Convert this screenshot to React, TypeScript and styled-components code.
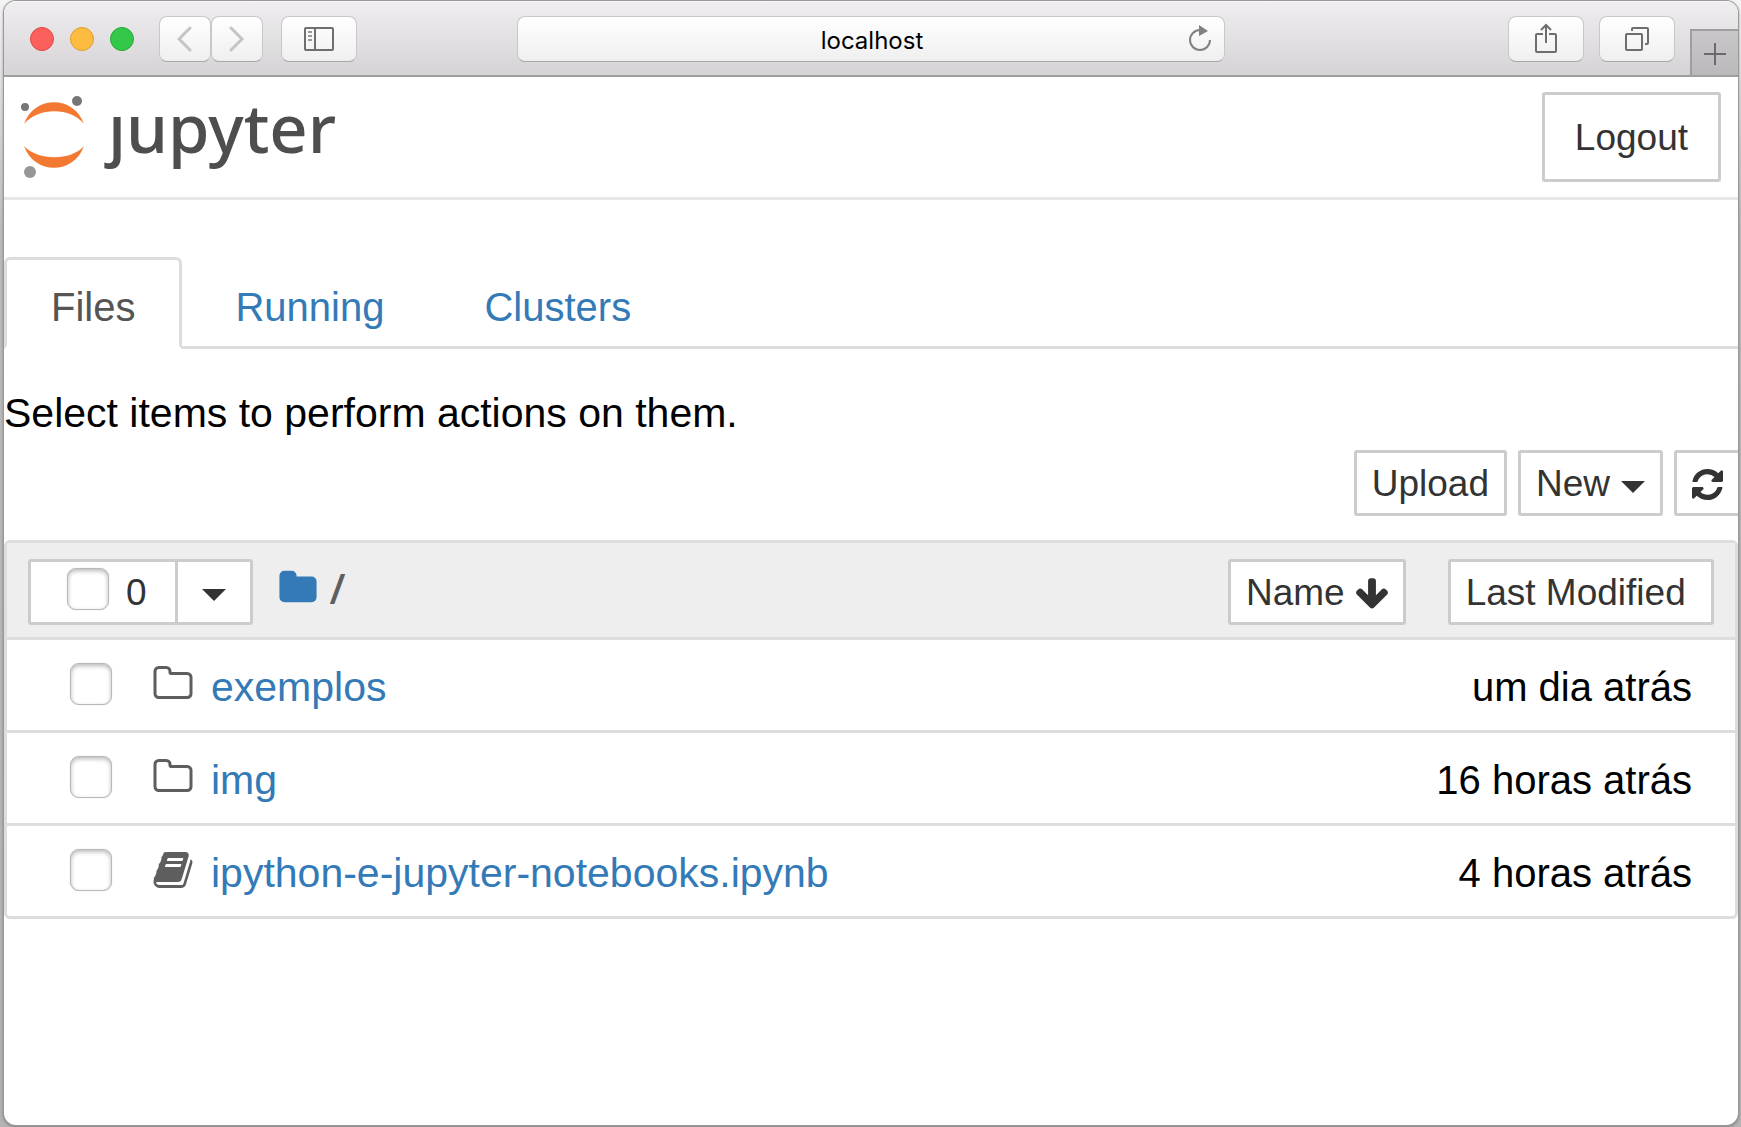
import React, { useState } from "react";
import styled, { createGlobalStyle, css } from "styled-components";

const GlobalStyle = createGlobalStyle`
  *, *::before, *::after { box-sizing: border-box; }
  body {
    margin: 0;
    background: linear-gradient(#f4f4f4, #bdbdbd 240px, #b4b4b4);
    font-family: "Liberation Sans", Arial, sans-serif;
    font-size: 41px;
    line-height: 56px;
    color: #000;
  }
  button, input { font: inherit; color: inherit; margin: 0; }
  a { color: #337ab7; text-decoration: none; }
  svg { display: block; flex: none; }
`;

const Desktop = styled.div`
  min-height: 100vh;
  padding: 1px 3px 2px 4px;
  display: flex;
`;

const Window = styled.div`
  flex: 1;
  min-width: 0;
  overflow: hidden;
  border-radius: 12px;
  background: #fff;
  box-shadow: 0 0 0 1px #999, 0 1px 3px 1px rgba(0, 0, 0, 0.3);
`;

/* ---------- browser toolbar ---------- */

const Toolbar = styled.div`
  display: grid;
  grid-template-columns: 1fr minmax(0, 708px) 1fr;
  height: 76px;
  border-bottom: 2px solid #9f9d9f;
  background: linear-gradient(#f0eef0, #d5d3d5);
  box-shadow: inset 0 1px 0 #f8f7f8;
`;

const ToolbarStart = styled.div`
  display: flex;
  align-items: flex-start;
  padding: 15px 0 0 26px;
`;

const ToolbarEnd = styled.div`
  display: flex;
  align-items: flex-start;
  justify-content: flex-end;
  gap: 15px;
  padding-top: 15px;
`;

const Lights = styled.div`
  display: flex;
  align-items: center;
  gap: 16px;
  height: 46px;
  margin-right: 25px;
`;

const Light = styled.button<{ $fill: string; $edge: string }>`
  width: 24px;
  height: 24px;
  padding: 0;
  border: 1px solid ${(p) => p.$edge};
  border-radius: 50%;
  background: ${(p) => p.$fill};
`;

const raised = css`
  border: 1px solid #c9c7c9;
  border-bottom-color: #a9a7a9;
  border-radius: 8px;
  background: linear-gradient(#fff, #f0eff0);
`;

const ToolButton = styled.button<{ $narrow?: boolean }>`
  ${raised}
  display: flex;
  align-items: center;
  justify-content: center;
  width: ${(p) => (p.$narrow ? 52 : 76)}px;
  height: 46px;
  padding: 0;
`;

const NavPair = styled.div`
  display: flex;
  margin-right: 18px;
`;

const AddressBar = styled.div`
  ${raised}
  display: flex;
  align-items: center;
  height: 46px;
  margin-top: 15px;
  padding: 0 12px 0 38px;
`;

const Address = styled.input`
  flex: 1;
  min-width: 0;
  padding: 3px 0 0;
  border: 0;
  outline: 0;
  background: none;
  font-family: Inter, Roboto, sans-serif;
  font-size: 24px;
  line-height: 32px;
  text-align: center;
`;

const PlainButton = styled.button`
  padding: 0;
  border: 0;
  background: none;
`;

const NewTab = styled.button`
  display: flex;
  align-items: center;
  justify-content: center;
  align-self: flex-end;
  width: 48px;
  height: 46px;
  padding: 2px 0 0;
  border: solid #9f9d9f;
  border-width: 2px 0 0 2px;
  background: linear-gradient(#c9c7c9, #bbb9bb);
`;

/* ---------- notebook page ---------- */

const Header = styled.header`
  display: flex;
  align-items: flex-start;
  justify-content: space-between;
  height: 123px;
  padding: 15px 17px 0;
  border-bottom: 3px solid #e7e7e7;
`;

const Brand = styled.a`
  display: flex;
  align-items: flex-start;
  gap: 23px;
  color: #4e4e4e;
`;

const Wordmark = styled.span`
  font-family: "Noto Sans", "Open Sans", sans-serif;
  font-size: 67px;
  font-weight: 500;
  line-height: 70px;
`;

const Button = styled.button<{ $large?: boolean }>`
  display: flex;
  align-items: center;
  gap: 11px;
  height: ${(p) => (p.$large ? 90 : 66)}px;
  padding: 2px ${(p) => (p.$large ? 30 : 15)}px 0;
  border: 3px solid #ccc;
  border-radius: 3px;
  background: #fff;
  color: #333;
  font-size: 37px;
  line-height: 48px;
  white-space: pre;
  flex: none;
`;

const Tabs = styled.nav`
  display: flex;
  gap: 6px;
  margin-top: 57px;
  border-bottom: 3px solid #ddd;
  font-size: 40px;
`;

const Tab = styled.a<{ $active?: boolean }>`
  height: 92px;
  margin-bottom: -3px;
  padding: 19px 44px 0;
  border: 3px solid transparent;
  border-radius: 6px 6px 0 0;
  ${(p) =>
    p.$active &&
    css`
      border-color: #ddd #ddd #fff;
      background: #fff;
      color: #555;
    `}
`;

const Hint = styled.p`
  margin: 36px 0 9px;
`;

const Actions = styled.div`
  display: flex;
  justify-content: flex-end;
  gap: 11px;
  margin: 0 -3px 24px 0;
`;

const FileTable = styled.table`
  width: 100%;
  border: 3px solid #ddd;
  border-radius: 6px;
  border-spacing: 0;
`;

const HeadCell = styled.th<{ $shrink?: boolean }>`
  ${(p) => p.$shrink && "width: 1px;"}
  padding: 16px 21px 12px;
  background: #eee;
  font-weight: normal;
`;

const HeadTools = styled.div`
  display: flex;
  align-items: center;
`;

const SelectGroup = styled.div`
  display: flex;
  height: 66px;
  border: 3px solid #ccc;
  border-radius: 3px;
  background: #fff;
  color: #333;
  font-size: 37px;
  line-height: 50px;
`;

const SelectAll = styled.label`
  display: flex;
  align-items: flex-start;
  gap: 17px;
  padding: 6px 28px 0 36px;
  border-right: 3px solid #ccc;
`;

const MenuButton = styled.button`
  display: flex;
  align-items: center;
  justify-content: center;
  width: 72px;
  padding: 0;
  border: 0;
  background: none;
`;

const Breadcrumb = styled.div`
  display: flex;
  align-items: center;
  gap: 12px;
  height: 66px;
  margin: 0 auto 0 25px;
  padding-bottom: 8px;
  color: #5e5e5e;
  font-family: "Open Sans", "Noto Sans", sans-serif;
  font-size: 41px;
  font-weight: 600;
`;

const Cell = styled.td`
  height: 93px;
  padding: 3px 0 0 63px;
  border-top: 3px solid #ddd;
  white-space: nowrap;
`;

const DateCell = styled(Cell)`
  padding: 3px 43px 0 0;
  font-size: 40px;
  text-align: right;
`;

const Check = styled.input.attrs({ type: "checkbox" })`
  appearance: none;
  flex: none;
  width: 42px;
  height: 42px;
  border: 1px solid #b9b9b9;
  border-radius: 9px;
  background: #fff;
  box-shadow: inset 0 2px 4px rgba(0, 0, 0, 0.28), 0 0 1px 0 #bbb;
  &:checked { background: #337ab7; }
`;

const Item = styled.div`
  display: flex;
  align-items: center;
  ${Check}, svg { margin-bottom: 5px; }
`;

const ItemLink = styled.a`
  display: flex;
  align-items: center;
  gap: 17px;
  margin-left: 40px;
`;

/* ---------- icons ---------- */

const Glyph = ({ d, size, color, box = "0 0 1792 1792" }: { d: string; size: number; color: string; box?: string }) => (
  <svg width={size} height={size} viewBox={box} fill={color} aria-hidden="true">
    <path d={d} />
  </svg>
);

const FOLDER =
  "M1728 608v704q0 92-66 158t-158 66h-1216q-92 0-158-66t-66-158v-960q0-92 66-158t158-66h320q92 0 158 66t66 158v32h672q92 0 158 66t66 158z";
const FOLDER_OPEN =
  "M1600 1312v-704q0-40-28-68t-68-28h-704q-40 0-68-28t-28-68v-64q0-40-28-68t-68-28h-320q-40 0-68 28t-28 68v960q0 40 28 68t68 28h1216q40 0 68-28t28-68zm128-704v704q0 92-66 158t-158 66h-1216q-92 0-158-66t-66-158v-960q0-92 66-158t158-66h320q92 0 158 66t66 158v32h672q92 0 158 66t66 158z";
const BOOK =
  "M1703 478q40 57 18 129l-275 906q-19 64-76.5 107.5t-122.5 43.5h-923q-77 0-148.5-53.5t-99.5-131.5q-24-67-2-127 0-4 3-27t4-37q1-8-3-21.5t-3-19.5q2-11 8-21t16.5-23.5 16.5-23.5q23-38 45-91.5t30-91.5q3-10 .5-30t-.5-28q3-11 17-28t17-23q21-36 42-92t25-90q1-9-2.5-32t.5-28q4-13 22-30.5t22-22.5q19-26 42.5-84.5t27.5-96.5q1-8-3-25.5t-2-26.5q2-8 9-18t18-23 17-21q8-12 16.5-30.5t15-35 16-36 19.5-32 26.5-23.5 36-11.5 47.5 5.5l-1 3q38-9 51-9h761q74 0 114 56t18 130l-274 906q-36 119-71.5 153.5t-128.5 34.5h-869q-27 0-38 15-11 16-1 43 24 70 144 70h923q29 0 56-15.5t35-41.5l300-987q7-22 5-57 38 15 59 43zm-1064 2q-4 13 2 22.5t20 9.5h608q13 0 25.5-9.5t16.5-22.5l21-64q4-13-2-22.5t-20-9.5h-608q-13 0-25.5 9.5t-16.5 22.5zm-83 256q-4 13 2 22.5t20 9.5h608q13 0 25.5-9.5t16.5-22.5l21-64q4-13-2-22.5t-20-9.5h-608q-13 0-25.5 9.5t-16.5 22.5z";
const ARROW_DOWN =
  "M1675 832q0 53-37 90l-651 652q-39 37-91 37-53 0-90-37l-651-652q-38-36-38-90 0-53 38-91l74-75q39-37 91-37 53 0 90 37l294 294v-704q0-52 38-90t90-38h128q52 0 90 38t38 90v704l294-294q37-37 90-37 52 0 91 37l75 75q37 39 37 91z";
const REFRESH =
  "M1639 1056q0 5-1 7-64 268-268 434.5t-478 166.5q-146 0-282.5-55t-243.5-157l-129 129q-19 19-45 19t-45-19-19-45v-448q0-26 19-45t45-19h448q26 0 45 19t19 45-19 45l-137 137q71 66 161 102t187 36q134 0 250-65t186-179q11-17 53-117 8-23 30-23h192q13 0 22.5 9.5t9.5 22.5zm25-800v448q0 26-19 45t-45 19h-448q-26 0-45-19t-19-45 19-45l138-138q-148-137-349-137-134 0-250 65t-186 179q-11 17-53 117-8 23-30 23h-199q-13 0-22.5-9.5t-9.5-22.5v-7q65-268 270-434.5t480-166.5q146 0 284 55.5t245 156.5l130-129q19-19 45-19t45 19 19 45z";

const Caret = () => (
  <svg width="24" height="18" viewBox="0 0 24 18" fill="#333" aria-hidden="true">
    <path d="M0 6h24L12 18z" />
  </svg>
);

const Chevron = ({ d }: { d: string }) => (
  <svg width="16" height="26" viewBox="0 0 16 26" fill="none" stroke="#c4c4c4" strokeWidth="3" strokeLinecap="round" aria-hidden="true">
    <path d={d} />
  </svg>
);

const SidebarIcon = () => (
  <svg width="30" height="24" viewBox="0 0 30 24" fill="none" stroke="#6f6d6f" strokeWidth="2" aria-hidden="true">
    <rect x="1" y="1" width="28" height="22" rx="1" />
    <path d="M11 1v22" />
    <path d="M4 5h4M4 9h4M4 13h4" stroke="#9a989a" />
  </svg>
);

const ShareIcon = () => (
  <svg width="22" height="32" viewBox="0 0 22 32" fill="none" stroke="#6f6d6f" strokeWidth="2" aria-hidden="true">
    <path d="M8 11H2q-1 0-1 1v16q0 1 1 1h18q1 0 1-1V12q0-1-1-1h-6M11 20V2M6 7l5-5 5 5" />
  </svg>
);

const WindowsIcon = () => (
  <svg width="24" height="24" viewBox="0 0 24 24" fill="none" stroke="#6f6d6f" strokeWidth="2" aria-hidden="true">
    <rect x="1" y="7" width="16" height="16" rx="1" />
    <path d="M7 4V2q0-1 1-1h14q1 0 1 1v14q0 1-1 1h-2" />
  </svg>
);

const ReloadIcon = () => (
  <svg width="24" height="28" viewBox="0 0 24 28" aria-hidden="true">
    <path d="M12 5a10 10 0 1 0 10 10" fill="none" stroke="#828082" strokeWidth="2" />
    <path d="M11 0v11l9-5z" fill="#828082" />
  </svg>
);

const PlusIcon = () => (
  <svg width="22" height="22" viewBox="0 0 22 22" stroke="#6c6a6c" strokeWidth="2" aria-hidden="true">
    <path d="M11 0v22M0 11h22" />
  </svg>
);

const Planet = () => (
  <svg width="64" height="88" viewBox="0 0 64 88" aria-hidden="true">
    <path d="M3 32C13 3 53 3 63 32C50 15 17 15 3 32z" fill="#f37933" />
    <path d="M3 54C13 83 53 83 63 54C50 69 17 69 3 54z" fill="#f37933" />
    <circle cx="56" cy="9" r="5" fill="#767677" />
    <circle cx="4" cy="15" r="4" fill="#767677" />
    <circle cx="9" cy="80" r="6" fill="#989798" />
  </svg>
);

const files = [
  { name: "exemplos", icon: FOLDER_OPEN, modified: "um dia atrás" },
  { name: "img", icon: FOLDER_OPEN, modified: "16 horas atrás" },
  { name: "ipython-e-jupyter-notebooks.ipynb", icon: BOOK, modified: "4 horas atrás" },
];

export default function App() {
  const [address, setAddress] = useState("localhost");
  const [selected, setSelected] = useState<string[]>([]);

  const toggle = (name: string) =>
    setSelected((s) => (s.includes(name) ? s.filter((n) => n !== name) : [...s, name]));
  const toggleAll = () => setSelected((s) => (s.length === files.length ? [] : files.map((f) => f.name)));

  return (
    <>
      <GlobalStyle />
      <Desktop>
        <Window>
          <Toolbar>
            <ToolbarStart>
              <Lights>
                <Light aria-label="Close" $fill="#fc605c" $edge="#e04845" />
                <Light aria-label="Minimize" $fill="#fdbc40" $edge="#dd9f33" />
                <Light aria-label="Zoom" $fill="#34c84a" $edge="#26a934" />
              </Lights>
              <NavPair>
                <ToolButton $narrow aria-label="Back"><Chevron d="M13 2L2 13l11 11" /></ToolButton>
                <ToolButton $narrow aria-label="Forward"><Chevron d="M2 2l11 11L2 24" /></ToolButton>
              </NavPair>
              <ToolButton aria-label="Sidebar"><SidebarIcon /></ToolButton>
            </ToolbarStart>
            <AddressBar>
              <Address aria-label="Address" value={address} onChange={(e) => setAddress(e.target.value)} />
              <PlainButton aria-label="Reload"><ReloadIcon /></PlainButton>
            </AddressBar>
            <ToolbarEnd>
              <ToolButton aria-label="Share"><ShareIcon /></ToolButton>
              <ToolButton aria-label="Show all tabs"><WindowsIcon /></ToolButton>
              <NewTab aria-label="New tab"><PlusIcon /></NewTab>
            </ToolbarEnd>
          </Toolbar>

          <Header>
            <Brand href="#" aria-label="jupyter">
              <Planet />
              <Wordmark>ȷupyter</Wordmark>
            </Brand>
            <Button $large>Logout</Button>
          </Header>

          <main>
            <Tabs>
              <Tab href="#files" $active>Files</Tab>
              <Tab href="#running">Running</Tab>
              <Tab href="#clusters">Clusters</Tab>
            </Tabs>

            <Hint>Select items to perform actions on them.</Hint>

            <Actions>
              <Button>Upload</Button>
              <Button>New<Caret /></Button>
              <Button aria-label="Refresh">
                <Glyph d={REFRESH} size={31} color="#333" box="128 128 1536 1536" />
              </Button>
            </Actions>

            <FileTable>
              <thead>
                <tr>
                  <HeadCell>
                    <HeadTools>
                      <SelectGroup>
                        <SelectAll>
                          <Check
                            aria-label="Select all"
                            checked={selected.length === files.length}
                            onChange={toggleAll}
                          />
                          {selected.length}
                        </SelectAll>
                        <MenuButton aria-label="Select by type"><Caret /></MenuButton>
                      </SelectGroup>
                      <Breadcrumb>
                        <a href="#root" aria-label="Home"><Glyph d={FOLDER} size={40} color="#337ab7" /></a>
                        <span>/</span>
                      </Breadcrumb>
                      <Button>Name<Glyph d={ARROW_DOWN} size={32} color="#333" box="112 64 1568 1568" /></Button>
                    </HeadTools>
                  </HeadCell>
                  <HeadCell $shrink>
                    <Button>Last Modified </Button>
                  </HeadCell>
                </tr>
              </thead>
              <tbody>
                {files.map((f) => (
                  <tr key={f.name}>
                    <Cell>
                      <Item>
                        <Check
                          aria-label={`Select ${f.name}`}
                          checked={selected.includes(f.name)}
                          onChange={() => toggle(f.name)}
                        />
                        <ItemLink href={`#${f.name}`}>
                          <Glyph d={f.icon} size={42} color="#5e5e5e" />
                          {f.name}
                        </ItemLink>
                      </Item>
                    </Cell>
                    <DateCell>{f.modified}</DateCell>
                  </tr>
                ))}
              </tbody>
            </FileTable>
          </main>
        </Window>
      </Desktop>
    </>
  );
}
